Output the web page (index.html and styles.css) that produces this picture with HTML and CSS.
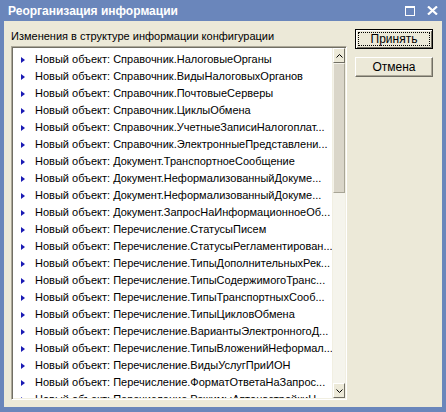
FILE: index.html
```html
<!DOCTYPE html>
<html lang="ru">

<head>
    <meta charset="utf-8">
    <title>Реорганизация информации</title>
    <link rel="stylesheet" href="styles.css">
</head>

<body>
    <div class="window">
        <div class="titlebar">
            <span class="titlebar__text">Реорганизация информации</span>
            <span class="titlebar__btn titlebar__btn--max"></span>
            <span class="titlebar__btn titlebar__btn--close">
                <svg width="11" height="9" viewBox="0 0 11 9">
                    <path d="M1 0.5 L10 8.5 M10 0.5 L1 8.5" stroke="#fff" stroke-width="2.2" fill="none" />
                </svg>
            </span>
        </div>

        <div class="client">
            <div class="main">
                <div class="caption">Изменения в структуре информации конфигурации</div>
                <div class="listbox">
                    <ul class="list">
                        <li class="list__row">Новый объект: Справочник.НалоговыеОрганы</li>
                        <li class="list__row">Новый объект: Справочник.ВидыНалоговыхОрганов</li>
                        <li class="list__row">Новый объект: Справочник.ПочтовыеСерверы</li>
                        <li class="list__row">Новый объект: Справочник.ЦиклыОбмена</li>
                        <li class="list__row">Новый объект: Справочник.УчетныеЗаписиНалогоплат...</li>
                        <li class="list__row">Новый объект: Справочник.ЭлектронныеПредставлени...</li>
                        <li class="list__row">Новый объект: Документ.ТранспортноеСообщение</li>
                        <li class="list__row">Новый объект: Документ.НеформализованныйДокуме...</li>
                        <li class="list__row">Новый объект: Документ.НеформализованныйДокуме...</li>
                        <li class="list__row">Новый объект: Документ.ЗапросНаИнформационноеОб...</li>
                        <li class="list__row">Новый объект: Перечисление.СтатусыПисем</li>
                        <li class="list__row">Новый объект: Перечисление.СтатусыРегламентирован...</li>
                        <li class="list__row">Новый объект: Перечисление.ТипыДополнительныхРек...</li>
                        <li class="list__row">Новый объект: Перечисление.ТипыСодержимогоТранс...</li>
                        <li class="list__row">Новый объект: Перечисление.ТипыТранспортныхСооб...</li>
                        <li class="list__row">Новый объект: Перечисление.ТипыЦикловОбмена</li>
                        <li class="list__row">Новый объект: Перечисление.ВариантыЭлектронногоД...</li>
                        <li class="list__row">Новый объект: Перечисление.ТипыВложенийНеформал...</li>
                        <li class="list__row">Новый объект: Перечисление.ВидыУслугПриИОН</li>
                        <li class="list__row">Новый объект: Перечисление.ФорматОтветаНаЗапрос...</li>
                        <li class="list__row">Новый объект: Перечисление.РежимыАвтонастройкиЦ...</li>
                    </ul>
                    <div class="scrollbar">
                        <div class="scrollbar__btn">
                            <svg width="7" height="4" viewBox="0 0 7 4">
                                <path d="M0.5 3.5 L3.5 0.5 L6.5 3.5" stroke="#000" fill="none" />
                            </svg>
                        </div>
                        <div class="scrollbar__thumb"></div>
                        <div class="scrollbar__track"></div>
                        <div class="scrollbar__btn">
                            <svg width="7" height="4" viewBox="0 0 7 4">
                                <path d="M0.5 0.5 L3.5 3.5 L6.5 0.5" stroke="#000" fill="none" />
                            </svg>
                        </div>
                    </div>
                </div>
            </div>

            <div class="actions">
                <button class="btn btn--default"><span class="btn__focus">Принять</span></button>
                <button class="btn">Отмена</button>
            </div>
        </div>
    </div>
</body>

</html>
```

FILE: styles.css
```css
:root {
    --frame-color: #6a86bb;
    --face-color: #ece9d8;
    --shadow-color: #aca899;
    --dark-shadow: #716f64;
}

html,
body {
    margin: 0;
    padding: 0;
}

body {
    font-family: "Liberation Sans", Arial, sans-serif;
    font-size: 11px;
    color: #000;
}

.window {
    width: 446px;
    height: 412px;
    box-sizing: border-box;
    background-color: var(--frame-color);
    padding: 0 4px 5px 4px;
    display: flex;
    flex-direction: column;
}

.titlebar {
    height: 21px;
    display: flex;
    align-items: center;
    padding-left: 4px;
    color: white;
}

.titlebar__text {
    flex: 1;
    font-weight: bold;
    font-size: 12px;
    padding-top: 1px;
}

.titlebar__btn {
    display: flex;
    align-items: center;
    justify-content: center;
}

.titlebar__btn--max {
    width: 8px;
    height: 7px;
    border: 1.5px solid white;
    border-top-width: 2px;
    margin-right: 12px;
}

.titlebar__btn--close {
    margin-right: 4px;
}

.client {
    flex: 1;
    background-color: var(--face-color);
    display: flex;
    padding: 8px 6px 3px 7px;
    gap: 8px;
}

.main {
    display: flex;
    flex-direction: column;
}

.caption {
    height: 17px;
    line-height: 14px;
}

.listbox {
    width: 336px;
    height: 354px;
    box-sizing: border-box;
    border: 1px solid;
    border-color: var(--shadow-color) white white var(--shadow-color);
    box-shadow: inset 1px 1px 0 var(--dark-shadow), inset -1px -1px 0 #f1efe2;
    background: white;
    display: flex;
    padding: 1px;
    overflow: hidden;
}

.list {
    list-style: none;
    margin: 0;
    padding: 3px 0 0 0;
    flex: 1;
    overflow: hidden;
}

.list__row {
    height: 17px;
    line-height: 17px;
    white-space: nowrap;
    overflow: hidden;
    display: flex;
    align-items: center;
    padding-left: 8px;
}

/* blue marker in front of each new object */
.list__row::before {
    content: "";
    width: 0;
    height: 0;
    border-top: 3.5px solid transparent;
    border-bottom: 3.5px solid transparent;
    border-left: 4px solid #1a1ab4;
    margin-right: 10px;
    flex: none;
}

.scrollbar {
    width: 12px;
    display: flex;
    flex-direction: column;
    border-left: 1px solid #f1efe2;
}

.scrollbar__btn {
    height: 15px;
    box-sizing: border-box;
    background: var(--face-color);
    border: 1px solid;
    border-color: white var(--dark-shadow) var(--dark-shadow) white;
    display: flex;
    align-items: center;
    justify-content: center;
}

.scrollbar__thumb {
    height: 130px;
    box-sizing: border-box;
    background: #dad6c9;
    border: 1px solid;
    border-color: #f5f3ea #a8a596 #a8a596 #f5f3ea;
}

.scrollbar__track {
    flex: 1;
    background: #f5f4ec;
}

.actions {
    display: flex;
    flex-direction: column;
    gap: 8px;
}

.btn {
    width: 78px;
    height: 20px;
    box-sizing: border-box;
    font: inherit;
    font-size: 12px;
    background: var(--face-color);
    border: 1px solid;
    border-color: white var(--dark-shadow) var(--dark-shadow) white;
    box-shadow: inset -1px -1px 0 var(--shadow-color);
    padding: 0;
    color: #000;
}

.btn--default {
    border: 1px solid #000;
    box-shadow: inset 1px 1px 0 white, inset -1px -1px 0 var(--dark-shadow);
    padding: 2px;
}

.btn__focus {
    display: block;
    height: 100%;
    box-sizing: border-box;
    border: 1px dotted #000;
    line-height: 12px;
}
```
